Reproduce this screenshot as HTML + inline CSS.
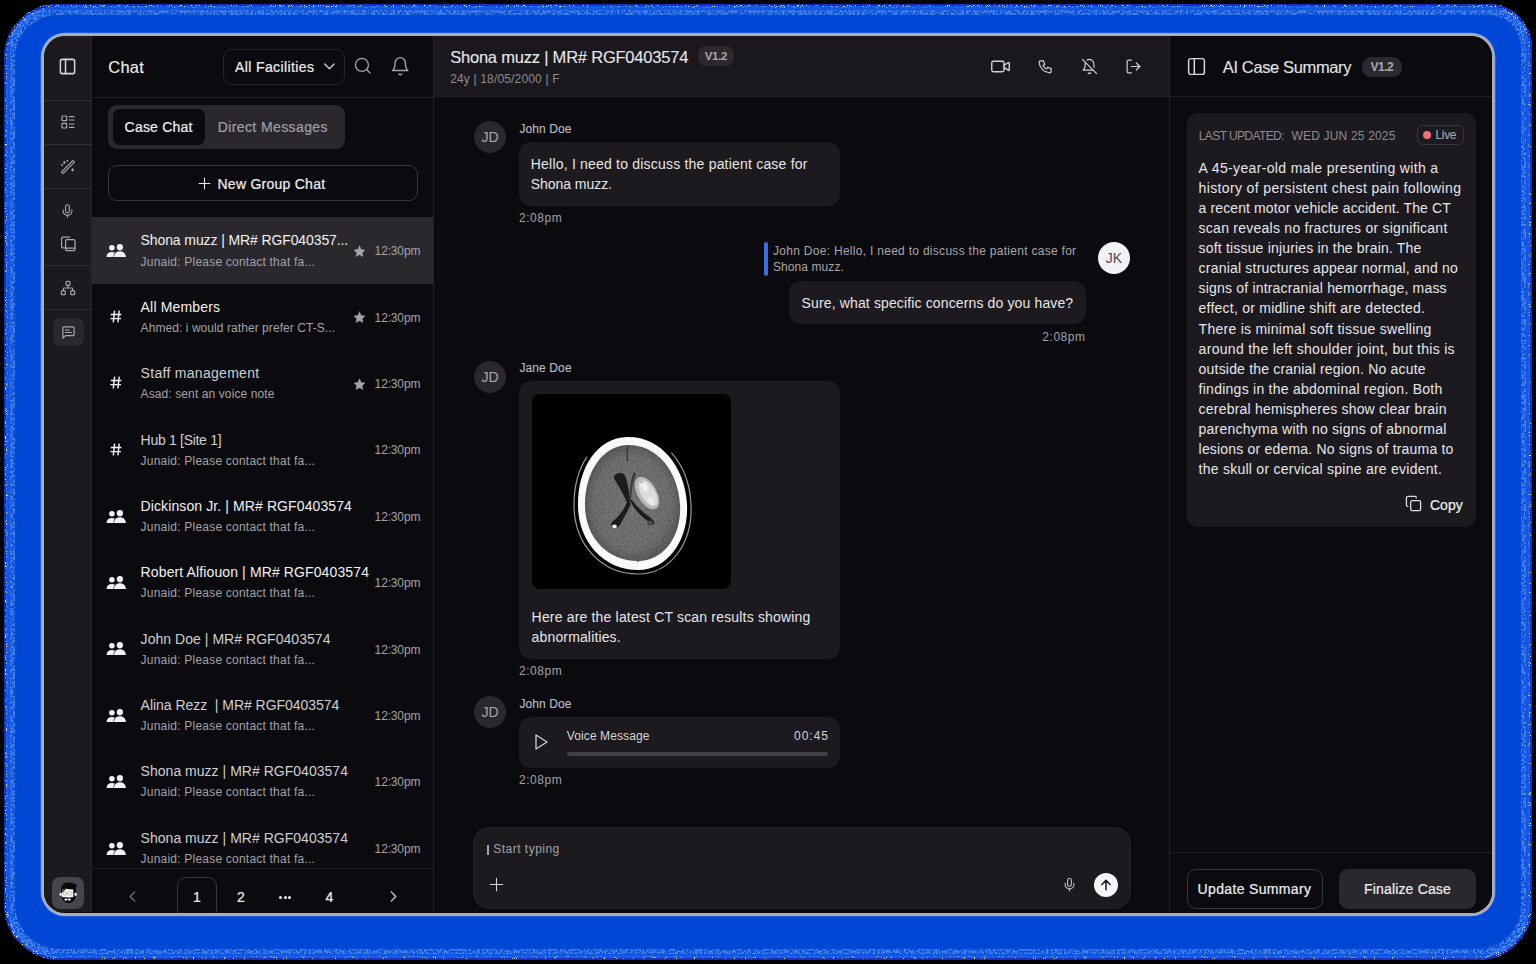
<!DOCTYPE html>
<html><head><meta charset="utf-8"><style>
html,body{margin:0;padding:0;width:1536px;height:964px;overflow:hidden;background:#000;}
body{position:relative;font-family:"Liberation Sans",sans-serif;}
.b{position:absolute;}
.t{position:absolute;white-space:nowrap;line-height:1;}
#blue{position:absolute;left:4px;top:4px;width:1528px;height:956px;border-radius:54px 44px 54px 56px;background:#0047D6;
box-shadow:inset 0 0 0 2px #1430C8, inset 0 0 9px 5px rgba(45,115,250,0.7);}
#spk{position:absolute;left:0;top:0;}
#frame{position:absolute;left:44px;top:36px;width:1448px;height:877px;border-radius:21px;overflow:hidden;background:#0B0A0E;
box-shadow:0 0 0 2.3px #ADAEB4, 0 0 0 3.3px #7FA3F5;}
#inner{position:absolute;left:-44px;top:-36px;width:1536px;height:964px;}
</style></head><body>
<div id="blue"></div>
<svg id="spk" width="1536" height="964" viewBox="0 0 1536 964">
<defs>
<filter id="spkf" x="0" y="0" width="100%" height="100%"><feTurbulence type="fractalNoise" baseFrequency="1.1" numOctaves="1" seed="11" result="t"/><feColorMatrix in="t" values="0 0 0 0 0.8  0 0 0 0 0.86  0 0 0 0 1  14 0 0 0 -8.6"/><feComposite in2="SourceGraphic" operator="in"/></filter>
</defs>
<filter id="mot" x="0" y="0" width="100%" height="100%"><feTurbulence type="fractalNoise" baseFrequency="0.45" numOctaves="2" seed="4" result="t"/><feColorMatrix in="t" values="0 0 0 0 0.3  0 0 0 0 0.55  0 0 0 0 1  5 0 0 0 -2.0"/><feGaussianBlur stdDeviation="0.5"/><feComposite in2="SourceGraphic" operator="in"/></filter>
<path d="M58.0 10.5 H1488.0 A37.5 37.5 0 0 1 1525.5 48.0 V906.0 A47.5 47.5 0 0 1 1478.0 953.5 H60.0 A49.5 49.5 0 0 1 10.5 904.0 V58.0 A47.5 47.5 0 0 1 58.0 10.5 Z" fill="none" stroke="#fff" stroke-width="9" filter="url(#mot)" opacity="0.45"/>
<path d="M58.0 5.5 H1488.0 A42.5 42.5 0 0 1 1530.5 48.0 V906.0 A52.5 52.5 0 0 1 1478.0 958.5 H60.0 A54.5 54.5 0 0 1 5.5 904.0 V58.0 A52.5 52.5 0 0 1 58.0 5.5 Z" fill="none" stroke="#fff" stroke-width="4" filter="url(#spkf)"/>
</svg>
<div id="frame"><div id="inner">
<div class="b" style="left:44px;top:36px;width:47px;height:876px;background:#1C1A1F;"></div>
<div class="b" style="left:91px;top:36px;width:1px;height:876px;background:#28262B;"></div>
<div class="b" style="left:44px;top:100px;width:47px;height:1px;background:#302E33;"></div>
<div class="b" style="left:44px;top:144px;width:47px;height:1px;background:#302E33;"></div>
<div class="b" style="left:44px;top:188px;width:47px;height:1px;background:#302E33;"></div>
<div class="b" style="left:44px;top:265px;width:47px;height:1px;background:#302E33;"></div>
<div class="b" style="left:44px;top:309px;width:47px;height:1px;background:#302E33;"></div>
<svg class="b" style="left:58px;top:57px;" width="19" height="19" viewBox="0 0 24 24" fill="none" stroke="#D8D8DA" stroke-width="1.9" stroke-linecap="round" stroke-linejoin="round"><rect x="3" y="3" width="18" height="18" rx="2.5"/><path d="M9.5 3v18"/></svg>
<svg class="b" style="left:60px;top:114px;" width="16" height="16" viewBox="0 0 24 24" fill="none" stroke="#A9A8AD" stroke-width="1.8" stroke-linecap="round" stroke-linejoin="round"><rect x="3" y="3" width="7" height="7" rx="1"/><rect x="3" y="14" width="7" height="7" rx="1"/><path d="M14 4h7"/><path d="M14 9h7"/><path d="M14 15h7"/><path d="M14 20h7"/></svg>
<svg class="b" style="left:60px;top:159px;" width="16" height="16" viewBox="0 0 24 24" fill="none" stroke="#A9A8AD" stroke-width="1.7" stroke-linecap="round" stroke-linejoin="round"><path d="M3.5 21.2 2.8 20.5a1.2 1.2 0 0 1 0-1.7L18.6 3a1.2 1.2 0 0 1 1.7 0l.7.7a1.2 1.2 0 0 1 0 1.7L5.2 21.2a1.2 1.2 0 0 1-1.7 0z"/><path d="M6.5 3.5l.6 1.4 1.4.6-1.4.6-.6 1.4-.6-1.4-1.4-.6 1.4-.6z" fill="#BDBCC0" stroke-width="1"/><path d="M19 14.5l.6 1.4 1.4.6-1.4.6-.6 1.4-.6-1.4-1.4-.6 1.4-.6z" fill="#BDBCC0" stroke-width="1"/><circle cx="11" cy="2.5" r=".6" fill="#BDBCC0"/><circle cx="3" cy="9" r=".6" fill="#BDBCC0"/></svg>
<svg class="b" style="left:60.3px;top:203px;" width="15" height="16" viewBox="0 0 24 24" fill="none" stroke="#A9A8AD" stroke-width="1.8" stroke-linecap="round" stroke-linejoin="round"><path d="M12 2a3 3 0 0 0-3 3v7a3 3 0 0 0 6 0V5a3 3 0 0 0-3-3Z"/><path d="M19 10v2a7 7 0 0 1-14 0v-2"/><path d="M12 19v3"/></svg>
<svg class="b" style="left:60px;top:236px;" width="16" height="16" viewBox="0 0 16 16" fill="none" stroke="#A9A8AD" stroke-width="1.25" stroke-linecap="round" stroke-linejoin="round"><path d="M4.6 11.8H2.9a1.3 1.3 0 0 1-1.3-1.3V2.3A1.3 1.3 0 0 1 2.9 1h6.8"/><rect x="5.6" y="3.7" width="9.4" height="11" rx="1.4"/><path d="M5.6 12.1h9.4"/></svg>
<svg class="b" style="left:60px;top:280px;" width="16" height="16" viewBox="0 0 24 24" fill="none" stroke="#A9A8AD" stroke-width="1.8" stroke-linecap="round" stroke-linejoin="round"><rect x="16" y="16" width="6" height="6" rx="1.5"/><rect x="2" y="16" width="6" height="6" rx="1.5"/><rect x="9" y="2" width="6" height="6" rx="1.5"/><path d="M5 16v-3a1 1 0 0 1 1-1h12a1 1 0 0 1 1 1v3"/><path d="M12 12V8"/></svg>
<div class="b" style="left:53px;top:318px;width:31px;height:28px;background:#2A282D;border-radius:7px;"></div>
<svg class="b" style="left:61px;top:325px;" width="15" height="15" viewBox="0 0 24 24" fill="none" stroke="#A9A8AD" stroke-width="1.9" stroke-linecap="round" stroke-linejoin="round"><path d="M21 15a2 2 0 0 1-2 2H7l-4 4V5a2 2 0 0 1 2-2h14a2 2 0 0 1 2 2z"/><path d="M13 8H7"/><path d="M17 12H7"/></svg>
<div class="b" style="left:52px;top:877px;width:32px;height:32px;background:#47454B;border-radius:8px;"></div>
<svg class="b" style="left:56px;top:880px" width="24" height="26" viewBox="0 0 24 26">
<path d="M5 11 C4.6 5.5 8 2.5 12.5 2.6 C15.5 2.6 18.5 3.5 21 5 C20 6 19.8 7 20 9 C20.3 12 20 16 19 18.5 C17.8 21.5 15 23 12.5 23 C10 23 7.2 21.5 6 18.5 C5.2 16.5 5.1 13.5 5 11 Z" fill="#080808"/>
<path d="M6 10.2 C7.2 8.4 9.2 8.6 11.2 8.9 C13.6 9.2 15.8 9 17.3 9.6 L17.4 17 C15 17.6 10 17.6 5.9 17 Z" fill="#f6f6f6"/>
<path d="M5.6 13 C6 10 7.6 8.2 10.4 8.4 C9.2 9.6 7.8 11.2 5.6 13 Z" fill="#080808"/>
<ellipse cx="4.7" cy="14.2" rx="1.2" ry="1.8" fill="#eeeeee"/><ellipse cx="19.6" cy="14.2" rx="1.2" ry="1.8" fill="#eeeeee"/>
<rect x="7.2" y="12" width="3.8" height="2.8" rx="0.8" fill="none" stroke="#9a9a9a" stroke-width="0.6"/><rect x="12" y="12" width="4" height="2.8" rx="0.8" fill="none" stroke="#9a9a9a" stroke-width="0.6"/>
<ellipse cx="9.9" cy="19.6" rx="1.6" ry="1.05" fill="#f2f2f2"/><ellipse cx="13.3" cy="19.6" rx="1.6" ry="1.05" fill="#f2f2f2"/>
</svg>
<div class="b" style="left:92px;top:36px;width:341px;height:876px;background:#0B0A0E;"></div>
<div class="b" style="left:433px;top:36px;width:1px;height:876px;background:#252328;"></div>
<div class="b" style="left:92px;top:97px;width:341px;height:1px;background:#1F1D22;"></div>
<div class="t" style="left:108.30px;top:59.03px;font-size:16.5px;color:#EDEDEF;-webkit-text-stroke:0.12px #EDEDEF;letter-spacing:0.233px;">Chat</div>
<div class="b" style="left:223px;top:49px;width:122px;height:36px;border:1px solid #29272C;border-radius:9px;box-sizing:border-box;"></div>
<div class="t" style="left:235.00px;top:60.15px;font-size:14px;color:#EDEDEF;-webkit-text-stroke:0.22px #EDEDEF;letter-spacing:0.385px;">All Facilities</div>
<svg class="b" style="left:320.1px;top:56.7px;" width="18.8" height="18.8" viewBox="0 0 24 24" fill="none" stroke="#D0D0D3" stroke-width="1.7" stroke-linecap="round" stroke-linejoin="round"><path d="m6 9 6 6 6-6"/></svg>
<svg class="b" style="left:353.4px;top:56.3px;" width="19.5" height="19.5" viewBox="0 0 24 24" fill="none" stroke="#A6A5AA" stroke-width="1.6" stroke-linecap="round" stroke-linejoin="round"><circle cx="11" cy="11" r="8"/><path d="m21 21-4.3-4.3"/></svg>
<svg class="b" style="left:389.6px;top:55.8px;" width="20.5" height="20.5" viewBox="0 0 24 24" fill="none" stroke="#A6A5AA" stroke-width="1.55" stroke-linecap="round" stroke-linejoin="round"><path d="M6 8a6 6 0 0 1 12 0c0 7 3 9 3 9H3s3-2 3-9"/><path d="M10.3 21a1.94 1.94 0 0 0 3.4 0"/></svg>
<div class="b" style="left:108px;top:105px;width:237px;height:44px;background:#2A282D;border-radius:9px;"></div>
<div class="b" style="left:113px;top:109px;width:92px;height:36px;background:#0B0A0E;border-radius:7px;"></div>
<div class="t" style="left:124.60px;top:120.35px;font-size:14px;color:#EDEDEF;-webkit-text-stroke:0.22px #EDEDEF;letter-spacing:0.200px;">Case Chat</div>
<div class="t" style="left:217.70px;top:120.35px;font-size:14px;color:#A09FA4;-webkit-text-stroke:0.22px #A09FA4;letter-spacing:0.400px;">Direct Messages</div>
<div class="b" style="left:108px;top:165px;width:310px;height:36px;border:1px solid #38363B;border-radius:9px;box-sizing:border-box;"></div>
<svg class="b" style="left:198px;top:177px;" width="13" height="13" viewBox="0 0 24 24" fill="none" stroke="#E8E8EA" stroke-width="2.0" stroke-linecap="round" stroke-linejoin="round"><path d="M12 2v20M2 12h20"/></svg>
<div class="t" style="left:217.50px;top:176.55px;font-size:14px;color:#EDEDEF;-webkit-text-stroke:0.22px #EDEDEF;letter-spacing:0.254px;">New Group Chat</div>
<div class="b" style="left:92px;top:217px;width:341px;height:651px;overflow:hidden">
<div class="b" style="left:-92px;top:-217px;width:1536px;height:964px">
<div class="b" style="left:92px;top:217px;width:341px;height:67px;background:#2A282D;"></div>
<svg class="b" style="left:106px;top:244.3px" width="20" height="14" viewBox="0 0 20 14"><circle cx="5.9" cy="3.8" r="2.75" fill="#F2F2F4"/><circle cx="13.9" cy="3.2" r="3.1" fill="#F2F2F4"/><path d="M0.5 12.9 C0.7 9.6 2.8 7.9 5.9 7.9 C7.1 7.9 8.1 8.2 8.9 8.6 C8 9.8 7.5 11.2 7.4 12.9 Z" fill="#F2F2F4"/><path d="M7.9 12.9 C8.2 9.3 10.6 7.2 13.9 7.2 C17.2 7.2 19.6 9.3 19.9 12.9 Z" fill="#F2F2F4"/></svg>
<div class="t" style="left:140.60px;top:233.45px;font-size:14px;color:#F0F0F2;letter-spacing:-0.107px;">Shona muzz | MR# RGF040357...</div>
<div class="t" style="left:140.60px;top:255.64px;font-size:12px;color:#A3A2A7;letter-spacing:0.213px;">Junaid: Please contact that fa...</div>
<svg class="b" style="left:353px;top:244.8px;" width="13" height="13" viewBox="0 0 24 24" fill="#A3A2A7" stroke="#A3A2A7" stroke-width="1" stroke-linecap="round" stroke-linejoin="round"><path d="M12 2l3.09 6.26L22 9.27l-5 4.87 1.18 6.88L12 17.77l-6.18 3.25L7 14.14 2 9.27l6.91-1.01L12 2z"/></svg>
<div class="t" style="right:1115.60px;top:245.44px;font-size:12px;color:#A3A2A7;text-align:right;letter-spacing:-0.150px;margin-right:0.150px;">12:30pm</div>
<svg class="b" style="left:110px;top:309.8px" width="12" height="13" viewBox="0 0 12 13" stroke="#F2F2F4" stroke-width="1.45" stroke-linecap="butt" fill="none"><path d="M4.6 0.6 3.3 12.4M9.2 0.6 7.9 12.4M0.8 4.4h10.6M0.4 8.6h10.6"/></svg>
<div class="t" style="left:140.60px;top:299.80px;font-size:14px;color:#F0F0F2;letter-spacing:0.170px;">All Members</div>
<div class="t" style="left:140.60px;top:321.99px;font-size:12px;color:#A3A2A7;letter-spacing:0.066px;">Ahmed: i would rather prefer CT-S...</div>
<svg class="b" style="left:353px;top:311.15px;" width="13" height="13" viewBox="0 0 24 24" fill="#A3A2A7" stroke="#A3A2A7" stroke-width="1" stroke-linecap="round" stroke-linejoin="round"><path d="M12 2l3.09 6.26L22 9.27l-5 4.87 1.18 6.88L12 17.77l-6.18 3.25L7 14.14 2 9.27l6.91-1.01L12 2z"/></svg>
<div class="t" style="right:1115.60px;top:311.79px;font-size:12px;color:#A3A2A7;text-align:right;letter-spacing:-0.150px;margin-right:0.150px;">12:30pm</div>
<svg class="b" style="left:110px;top:376.2px" width="12" height="13" viewBox="0 0 12 13" stroke="#F2F2F4" stroke-width="1.45" stroke-linecap="butt" fill="none"><path d="M4.6 0.6 3.3 12.4M9.2 0.6 7.9 12.4M0.8 4.4h10.6M0.4 8.6h10.6"/></svg>
<div class="t" style="left:140.60px;top:366.15px;font-size:14px;color:#CFCFD2;letter-spacing:0.293px;">Staff management</div>
<div class="t" style="left:140.60px;top:388.34px;font-size:12px;color:#A3A2A7;letter-spacing:0.104px;">Asad: sent an voice note</div>
<svg class="b" style="left:353px;top:377.5px;" width="13" height="13" viewBox="0 0 24 24" fill="#A3A2A7" stroke="#A3A2A7" stroke-width="1" stroke-linecap="round" stroke-linejoin="round"><path d="M12 2l3.09 6.26L22 9.27l-5 4.87 1.18 6.88L12 17.77l-6.18 3.25L7 14.14 2 9.27l6.91-1.01L12 2z"/></svg>
<div class="t" style="right:1115.60px;top:378.14px;font-size:12px;color:#A3A2A7;text-align:right;letter-spacing:-0.150px;margin-right:0.150px;">12:30pm</div>
<svg class="b" style="left:110px;top:442.6px" width="12" height="13" viewBox="0 0 12 13" stroke="#F2F2F4" stroke-width="1.45" stroke-linecap="butt" fill="none"><path d="M4.6 0.6 3.3 12.4M9.2 0.6 7.9 12.4M0.8 4.4h10.6M0.4 8.6h10.6"/></svg>
<div class="t" style="left:140.60px;top:432.50px;font-size:14px;color:#CFCFD2;letter-spacing:-0.300px;">Hub 1 [Site 1]</div>
<div class="t" style="left:140.60px;top:454.69px;font-size:12px;color:#A3A2A7;letter-spacing:0.213px;">Junaid: Please contact that fa...</div>
<div class="t" style="right:1115.60px;top:444.49px;font-size:12px;color:#A3A2A7;text-align:right;letter-spacing:-0.150px;margin-right:0.150px;">12:30pm</div>
<svg class="b" style="left:106px;top:509.7px" width="20" height="14" viewBox="0 0 20 14"><circle cx="5.9" cy="3.8" r="2.75" fill="#F2F2F4"/><circle cx="13.9" cy="3.2" r="3.1" fill="#F2F2F4"/><path d="M0.5 12.9 C0.7 9.6 2.8 7.9 5.9 7.9 C7.1 7.9 8.1 8.2 8.9 8.6 C8 9.8 7.5 11.2 7.4 12.9 Z" fill="#F2F2F4"/><path d="M7.9 12.9 C8.2 9.3 10.6 7.2 13.9 7.2 C17.2 7.2 19.6 9.3 19.9 12.9 Z" fill="#F2F2F4"/></svg>
<div class="t" style="left:140.60px;top:498.85px;font-size:14px;color:#F0F0F2;letter-spacing:0.103px;">Dickinson Jr. | MR# RGF0403574</div>
<div class="t" style="left:140.60px;top:521.04px;font-size:12px;color:#A3A2A7;letter-spacing:0.213px;">Junaid: Please contact that fa...</div>
<div class="t" style="right:1115.60px;top:510.84px;font-size:12px;color:#A3A2A7;text-align:right;letter-spacing:-0.150px;margin-right:0.150px;">12:30pm</div>
<svg class="b" style="left:106px;top:576.0px" width="20" height="14" viewBox="0 0 20 14"><circle cx="5.9" cy="3.8" r="2.75" fill="#F2F2F4"/><circle cx="13.9" cy="3.2" r="3.1" fill="#F2F2F4"/><path d="M0.5 12.9 C0.7 9.6 2.8 7.9 5.9 7.9 C7.1 7.9 8.1 8.2 8.9 8.6 C8 9.8 7.5 11.2 7.4 12.9 Z" fill="#F2F2F4"/><path d="M7.9 12.9 C8.2 9.3 10.6 7.2 13.9 7.2 C17.2 7.2 19.6 9.3 19.9 12.9 Z" fill="#F2F2F4"/></svg>
<div class="t" style="left:140.60px;top:565.20px;font-size:14px;color:#F0F0F2;letter-spacing:0.119px;">Robert Alfiouon | MR# RGF0403574</div>
<div class="t" style="left:140.60px;top:587.39px;font-size:12px;color:#A3A2A7;letter-spacing:0.213px;">Junaid: Please contact that fa...</div>
<div class="t" style="right:1115.60px;top:577.19px;font-size:12px;color:#A3A2A7;text-align:right;letter-spacing:-0.150px;margin-right:0.150px;">12:30pm</div>
<svg class="b" style="left:106px;top:642.4px" width="20" height="14" viewBox="0 0 20 14"><circle cx="5.9" cy="3.8" r="2.75" fill="#F2F2F4"/><circle cx="13.9" cy="3.2" r="3.1" fill="#F2F2F4"/><path d="M0.5 12.9 C0.7 9.6 2.8 7.9 5.9 7.9 C7.1 7.9 8.1 8.2 8.9 8.6 C8 9.8 7.5 11.2 7.4 12.9 Z" fill="#F2F2F4"/><path d="M7.9 12.9 C8.2 9.3 10.6 7.2 13.9 7.2 C17.2 7.2 19.6 9.3 19.9 12.9 Z" fill="#F2F2F4"/></svg>
<div class="t" style="left:140.60px;top:631.55px;font-size:14px;color:#CFCFD2;letter-spacing:0.042px;">John Doe | MR# RGF0403574</div>
<div class="t" style="left:140.60px;top:653.74px;font-size:12px;color:#A3A2A7;letter-spacing:0.213px;">Junaid: Please contact that fa...</div>
<div class="t" style="right:1115.60px;top:643.54px;font-size:12px;color:#A3A2A7;text-align:right;letter-spacing:-0.150px;margin-right:0.150px;">12:30pm</div>
<svg class="b" style="left:106px;top:708.8px" width="20" height="14" viewBox="0 0 20 14"><circle cx="5.9" cy="3.8" r="2.75" fill="#F2F2F4"/><circle cx="13.9" cy="3.2" r="3.1" fill="#F2F2F4"/><path d="M0.5 12.9 C0.7 9.6 2.8 7.9 5.9 7.9 C7.1 7.9 8.1 8.2 8.9 8.6 C8 9.8 7.5 11.2 7.4 12.9 Z" fill="#F2F2F4"/><path d="M7.9 12.9 C8.2 9.3 10.6 7.2 13.9 7.2 C17.2 7.2 19.6 9.3 19.9 12.9 Z" fill="#F2F2F4"/></svg>
<div class="t" style="left:140.60px;top:697.90px;font-size:14px;color:#CFCFD2;letter-spacing:-0.037px;">Alina Rezz &nbsp;| MR# RGF0403574</div>
<div class="t" style="left:140.60px;top:720.09px;font-size:12px;color:#A3A2A7;letter-spacing:0.213px;">Junaid: Please contact that fa...</div>
<div class="t" style="right:1115.60px;top:709.89px;font-size:12px;color:#A3A2A7;text-align:right;letter-spacing:-0.150px;margin-right:0.150px;">12:30pm</div>
<svg class="b" style="left:106px;top:775.1px" width="20" height="14" viewBox="0 0 20 14"><circle cx="5.9" cy="3.8" r="2.75" fill="#F2F2F4"/><circle cx="13.9" cy="3.2" r="3.1" fill="#F2F2F4"/><path d="M0.5 12.9 C0.7 9.6 2.8 7.9 5.9 7.9 C7.1 7.9 8.1 8.2 8.9 8.6 C8 9.8 7.5 11.2 7.4 12.9 Z" fill="#F2F2F4"/><path d="M7.9 12.9 C8.2 9.3 10.6 7.2 13.9 7.2 C17.2 7.2 19.6 9.3 19.9 12.9 Z" fill="#F2F2F4"/></svg>
<div class="t" style="left:140.60px;top:764.25px;font-size:14px;color:#CFCFD2;letter-spacing:0.023px;">Shona muzz | MR# RGF0403574</div>
<div class="t" style="left:140.60px;top:786.44px;font-size:12px;color:#A3A2A7;letter-spacing:0.213px;">Junaid: Please contact that fa...</div>
<div class="t" style="right:1115.60px;top:776.24px;font-size:12px;color:#A3A2A7;text-align:right;letter-spacing:-0.150px;margin-right:0.150px;">12:30pm</div>
<svg class="b" style="left:106px;top:841.5px" width="20" height="14" viewBox="0 0 20 14"><circle cx="5.9" cy="3.8" r="2.75" fill="#F2F2F4"/><circle cx="13.9" cy="3.2" r="3.1" fill="#F2F2F4"/><path d="M0.5 12.9 C0.7 9.6 2.8 7.9 5.9 7.9 C7.1 7.9 8.1 8.2 8.9 8.6 C8 9.8 7.5 11.2 7.4 12.9 Z" fill="#F2F2F4"/><path d="M7.9 12.9 C8.2 9.3 10.6 7.2 13.9 7.2 C17.2 7.2 19.6 9.3 19.9 12.9 Z" fill="#F2F2F4"/></svg>
<div class="t" style="left:140.60px;top:830.60px;font-size:14px;color:#CFCFD2;letter-spacing:0.023px;">Shona muzz | MR# RGF0403574</div>
<div class="t" style="left:140.60px;top:852.79px;font-size:12px;color:#A3A2A7;letter-spacing:0.213px;">Junaid: Please contact that fa...</div>
<div class="t" style="right:1115.60px;top:842.59px;font-size:12px;color:#A3A2A7;text-align:right;letter-spacing:-0.150px;margin-right:0.150px;">12:30pm</div>
</div></div>
<div class="b" style="left:92px;top:868px;width:341px;height:1px;background:#1F1D22;"></div>
<div class="b" style="left:177px;top:877px;width:40px;height:43px;border:1px solid #38363B;border-radius:9px;box-sizing:border-box;"></div>
<svg class="b" style="left:128px;top:891px;" width="9" height="11" viewBox="0 0 9 12" fill="none" stroke="#77767B" stroke-width="1.4" stroke-linecap="round" stroke-linejoin="round"><path d="M7 1 2 6l5 5"/></svg>
<svg class="b" style="left:389px;top:891px;" width="9" height="11" viewBox="0 0 9 12" fill="none" stroke="#D0D0D3" stroke-width="1.4" stroke-linecap="round" stroke-linejoin="round"><path d="M2 1l5 5-5 5"/></svg>
<div class="t" style="left:96.80px;width:200px;text-align:center;top:890.15px;font-size:14px;color:#EDEDEF;-webkit-text-stroke:0.22px #EDEDEF;">1</div>
<div class="t" style="left:140.80px;width:200px;text-align:center;top:890.15px;font-size:14px;color:#EDEDEF;-webkit-text-stroke:0.22px #EDEDEF;">2</div>
<div class="b" style="left:279px;top:895.5px;width:3px;height:3.0px;background:#EDEDEF;border-radius:50%;"></div>
<div class="b" style="left:283.6px;top:895.5px;width:3.0px;height:3.0px;background:#EDEDEF;border-radius:50%;"></div>
<div class="b" style="left:288.2px;top:895.5px;width:3.0px;height:3.0px;background:#EDEDEF;border-radius:50%;"></div>
<div class="t" style="left:229.30px;width:200px;text-align:center;top:890.15px;font-size:14px;color:#EDEDEF;-webkit-text-stroke:0.22px #EDEDEF;">4</div>
<div class="b" style="left:434px;top:36px;width:735px;height:876px;background:#0B0A0E;"></div>
<div class="b" style="left:434px;top:36px;width:735px;height:60px;background:#1A181D;"></div>
<div class="b" style="left:434px;top:96px;width:735px;height:1px;background:#232126;"></div>
<div class="b" style="left:1169px;top:36px;width:1px;height:876px;background:#252328;"></div>
<div class="t" style="left:450.20px;top:48.73px;font-size:16.5px;color:#E6E6E8;-webkit-text-stroke:0.12px #E6E6E8;letter-spacing:-0.212px;">Shona muzz | MR# RGF0403574</div>
<div class="b" style="left:698px;top:46px;width:36px;height:20px;background:#2B292E;border-radius:8px;"></div>
<div class="t" style="left:616.00px;width:200px;text-align:center;top:51.06px;font-size:11.5px;color:#A9A8AD;font-weight:700;letter-spacing:-0.267px;text-indent:-0.133px;">V1.2</div>
<div class="t" style="left:450.20px;top:72.84px;font-size:12px;color:#8D8C91;letter-spacing:0.158px;">24y | 18/05/2000 | F</div>
<svg class="b" style="left:990px;top:56px;" width="21" height="21" viewBox="0 0 24 24" fill="none" stroke="#D0D0D3" stroke-width="1.6" stroke-linecap="round" stroke-linejoin="round"><path d="m16 13 5.223 3.482a.5.5 0 0 0 .777-.416V7.87a.5.5 0 0 0-.752-.432L16 10.5"/><rect x="2" y="6" width="14" height="12" rx="2"/></svg>
<svg class="b" style="left:1037px;top:58px;" width="17" height="17" viewBox="0 0 24 24" fill="none" stroke="#D0D0D3" stroke-width="1.7" stroke-linecap="round" stroke-linejoin="round"><path d="M5 4h4l2 5l-2.5 1.5a11 11 0 0 0 5 5l1.5-2.5l5 2v4a2 2 0 0 1-2 2a16 16 0 0 1-15-15a2 2 0 0 1 2-2"/></svg>
<svg class="b" style="left:1081px;top:58px;" width="17" height="17" viewBox="0 0 24 24" fill="none" stroke="#D0D0D3" stroke-width="1.7" stroke-linecap="round" stroke-linejoin="round"><path d="M8.7 3A6 6 0 0 1 18 8a21.3 21.3 0 0 0 .6 5"/><path d="M17 17H3s3-2 3-9a4.67 4.67 0 0 1 .3-1.7"/><path d="M10.3 21a1.94 1.94 0 0 0 3.4 0"/><path d="m2 2 20 20"/></svg>
<svg class="b" style="left:1125px;top:58px;" width="17" height="17" viewBox="0 0 24 24" fill="none" stroke="#D0D0D3" stroke-width="1.7" stroke-linecap="round" stroke-linejoin="round"><path d="M9 21H5a2 2 0 0 1-2-2V5a2 2 0 0 1 2-2h4"/><path d="m16 17 5-5-5-5"/><path d="M21 12H9"/></svg>
<div class="b" style="left:474px;top:121px;width:32px;height:32px;background:#2A282D;border-radius:50%;"></div>
<div class="t" style="left:390.00px;width:200px;text-align:center;top:130.15px;font-size:14px;color:#A8A7AC;">JD</div>
<div class="t" style="left:519.40px;top:122.84px;font-size:12px;color:#BDBCC1;-webkit-text-stroke:0.12px #BDBCC1;letter-spacing:0.086px;">John Doe</div>
<div class="b" style="left:519px;top:141.5px;width:321px;height:64.0px;background:#1C1A1F;border-radius:12px;"></div>
<div class="t" style="left:530.80px;top:156.95px;font-size:14px;color:#E6E6E8;letter-spacing:0.202px;">Hello, I need to discuss the patient case for</div>
<div class="t" style="left:530.80px;top:177.05px;font-size:14px;color:#E6E6E8;letter-spacing:-0.050px;">Shona muzz.</div>
<div class="t" style="left:519.00px;top:211.54px;font-size:12px;color:#A3A2A7;letter-spacing:0.520px;">2:08pm</div>
<div class="b" style="left:764px;top:242px;width:3.5px;height:34px;background:#3A6FE4;border-radius:2px;"></div>
<div class="t" style="left:773.00px;top:245.14px;font-size:12px;color:#A8A7AC;letter-spacing:0.289px;">John Doe: Hello, I need to discuss the patient case for</div>
<div class="t" style="left:773.00px;top:260.84px;font-size:12px;color:#A8A7AC;letter-spacing:0.080px;">Shona muzz.</div>
<div class="b" style="left:1098px;top:242px;width:32px;height:32px;background:#F2F2F4;border-radius:50%;"></div>
<div class="t" style="left:1014.00px;width:200px;text-align:center;top:251.15px;font-size:14px;color:#4A494F;">JK</div>
<div class="b" style="left:789px;top:280.5px;width:296.5px;height:43.5px;background:#1C1A1F;border-radius:12px;"></div>
<div class="t" style="left:801.60px;top:295.75px;font-size:14px;color:#E6E6E8;letter-spacing:0.135px;">Sure, what specific concerns do you have?</div>
<div class="t" style="right:451.00px;top:330.54px;font-size:12px;color:#A3A2A7;text-align:right;letter-spacing:0.520px;margin-right:-0.520px;">2:08pm</div>
<div class="b" style="left:474px;top:360.5px;width:32px;height:32.0px;background:#2A282D;border-radius:50%;"></div>
<div class="t" style="left:390.00px;width:200px;text-align:center;top:369.65px;font-size:14px;color:#A8A7AC;">JD</div>
<div class="t" style="left:519.40px;top:361.74px;font-size:12px;color:#BDBCC1;-webkit-text-stroke:0.12px #BDBCC1;letter-spacing:0.114px;">Jane Doe</div>
<div class="b" style="left:519px;top:381px;width:321px;height:278px;background:#1C1A1F;border-radius:12px;"></div>
<div class="t" style="left:531.60px;top:610.45px;font-size:14px;color:#E6E6E8;letter-spacing:0.176px;">Here are the latest CT scan results showing</div>
<div class="t" style="left:531.60px;top:630.15px;font-size:14px;color:#E6E6E8;letter-spacing:0.146px;">abnormalities.</div>
<div class="t" style="left:519.00px;top:665.04px;font-size:12px;color:#A3A2A7;letter-spacing:0.520px;">2:08pm</div>
<svg class="b" style="left:532px;top:394px;border-radius:8px" width="199" height="195" viewBox="0 0 199 195">
<defs>
<filter id="nz" x="0" y="0" width="100%" height="100%"><feTurbulence type="fractalNoise" baseFrequency="0.5" numOctaves="2" seed="7"/><feColorMatrix values="0 0 0 0 0  0 0 0 0 0  0 0 0 0 0  0 0 0 -1.4 0.9"/><feComposite in2="SourceGraphic" operator="in"/></filter>
<filter id="bl"><feGaussianBlur stdDeviation="0.6"/></filter>
<filter id="bl2"><feGaussianBlur stdDeviation="1.3"/></filter>
<radialGradient id="br" cx="50%" cy="50%" r="50%"><stop offset="0" stop-color="#787878"/><stop offset="0.8" stop-color="#727272"/><stop offset="1" stop-color="#5e5e5e"/></radialGradient>
</defs>
<rect width="199" height="195" fill="#000"/>
<path d="M95 39 C131 38 157 70 159 110 C161 150 138 180 106 180 C69 180 42 150 42 111 C42 70 64 40 95 39 Z" fill="none" stroke="#9a9a9a" stroke-width="1.2" stroke-dasharray="0 50 310 100"/>
<path d="M95 43 C128 42 153 72 155 110 C157 146 136 176 106 176 C72 176 46 148 46 111 C46 72 66 44 95 43 Z" fill="#fafafa" filter="url(#bl)"/>
<path d="M95 51 C124 50 146 76 148 110 C150 142 132 167 106 167 C76 167 53 144 53 111 C53 77 71 52 95 51 Z" fill="url(#br)" filter="url(#bl)"/>
<path d="M95 51 C124 50 146 76 148 110 C150 142 132 167 106 167 C76 167 53 144 53 111 C53 77 71 52 95 51 Z" fill="#000" filter="url(#nz)" opacity="0.28"/>
<g filter="url(#bl)">

<path d="M82 84 C82 79 88 78 92 80 C95 84 97 96 98 108 L95 109 C92 100 86 92 82 84 Z" fill="#1c1c1c"/>
<path d="M102 78 C99 85 97 96 97.5 108 L99 108 C99.5 97 101 87 104 80 Z" fill="#3a3a3a"/>
<path d="M96 106 C93 114 88 122 80 128 C77 134 84 136 88 131 C91 126 95 118 99 110 Z" fill="#1c1c1c"/>
<path d="M98 106 C102 116 110 123 117 128 C122 133 124 130 121 126 C115 121 105 114 100 106 Z" fill="#1c1c1c"/>
<ellipse cx="118" cy="129" rx="3" ry="2.5" fill="#4a4a4a"/>
<ellipse cx="115" cy="99" rx="9.5" ry="18" transform="rotate(-30 115 99)" fill="#b8b8b8"/>
<ellipse cx="116" cy="99" rx="7" ry="14.5" transform="rotate(-30 116 99)" fill="#dcdcdc"/>
<ellipse cx="112" cy="92" rx="3.2" ry="5.5" transform="rotate(-30 112 92)" fill="#efefef"/>
<ellipse cx="119" cy="107" rx="2.8" ry="4.5" transform="rotate(-30 119 107)" fill="#e8e8e8"/>
<ellipse cx="109.5" cy="87" rx="2" ry="2.5" fill="#c0c0c0"/>
<ellipse cx="82.5" cy="132.4" rx="2.3" ry="1.8" fill="#ffffff"/>
<path d="M95.2 53 L95.4 67" stroke="#333" stroke-width="1.3"/>
<path d="M105 160 L106 168" stroke="#555" stroke-width="1.5"/>
</g>
</svg>
<div class="b" style="left:474px;top:695.8px;width:32px;height:32.0px;background:#2A282D;border-radius:50%;"></div>
<div class="t" style="left:390.00px;width:200px;text-align:center;top:704.95px;font-size:14px;color:#A8A7AC;">JD</div>
<div class="t" style="left:519.40px;top:697.84px;font-size:12px;color:#BDBCC1;-webkit-text-stroke:0.12px #BDBCC1;letter-spacing:0.086px;">John Doe</div>
<div class="b" style="left:519px;top:716.5px;width:321px;height:51.5px;background:#1C1A1F;border-radius:12px;"></div>
<svg class="b" style="left:533px;top:733px;" width="16" height="18" viewBox="0 0 16 18" fill="none" stroke="#D0D0D4" stroke-width="1.3" stroke-linecap="round" stroke-linejoin="round"><path d="M3 2 L14 9 L3 16 Z"/></svg>
<div class="t" style="left:566.80px;top:729.54px;font-size:12px;color:#D6D6D9;letter-spacing:0.100px;">Voice Message</div>
<div class="t" style="right:708.00px;top:729.54px;font-size:12px;color:#D6D6D9;text-align:right;letter-spacing:1.000px;margin-right:-1.000px;">00:45</div>
<div class="b" style="left:567px;top:752px;width:261px;height:4px;background:#434147;border-radius:2px;"></div>
<div class="t" style="left:519.00px;top:773.84px;font-size:12px;color:#A3A2A7;letter-spacing:0.520px;">2:08pm</div>
<div class="b" style="left:473px;top:827px;width:658px;height:82px;background:#1C1A1F;border:1px solid #232126;border-radius:16px;box-sizing:border-box;"></div>
<div class="b" style="left:487px;top:845px;width:2px;height:10px;background:#A3A2A7;"></div>
<div class="t" style="left:493.20px;top:842.84px;font-size:12px;color:#A3A2A7;letter-spacing:0.491px;">Start typing</div>
<svg class="b" style="left:489px;top:877px;" width="15" height="15" viewBox="0 0 24 24" fill="none" stroke="#D6D6D9" stroke-width="1.7" stroke-linecap="round" stroke-linejoin="round"><path d="M12 2v20M2 12h20"/></svg>
<svg class="b" style="left:1062px;top:877px;" width="15" height="15" viewBox="0 0 24 24" fill="none" stroke="#BDBCC0" stroke-width="1.8" stroke-linecap="round" stroke-linejoin="round"><path d="M12 2a3 3 0 0 0-3 3v7a3 3 0 0 0 6 0V5a3 3 0 0 0-3-3Z"/><path d="M19 10v2a7 7 0 0 1-14 0v-2"/><path d="M12 19v3"/></svg>
<div class="b" style="left:1094px;top:873px;width:24px;height:24px;background:#F6F6F8;border-radius:50%;"></div>
<svg class="b" style="left:1099px;top:878px;" width="14" height="14" viewBox="0 0 24 24" fill="none" stroke="#1A181D" stroke-width="2.6" stroke-linecap="round" stroke-linejoin="round"><path d="M12 20V4M5 11l7-7 7 7"/></svg>
<div class="b" style="left:1170px;top:36px;width:330px;height:884px;background:#0B0A0E;"></div>
<div class="b" style="left:1170px;top:96px;width:330px;height:1px;background:#1F1D22;"></div>
<svg class="b" style="left:1186px;top:56px;" width="21" height="21" viewBox="0 0 24 24" fill="none" stroke="#D8D8DA" stroke-width="1.7" stroke-linecap="round" stroke-linejoin="round"><rect x="3" y="3" width="18" height="18" rx="2.5"/><path d="M9.5 3v18"/></svg>
<div class="t" style="left:1222.80px;top:59.33px;font-size:16.5px;color:#E2E2E4;-webkit-text-stroke:0.12px #E2E2E4;letter-spacing:-0.371px;">AI Case Summary</div>
<div class="b" style="left:1362px;top:56.5px;width:40px;height:20.0px;background:#2B292E;border-radius:9px;"></div>
<div class="t" style="left:1282.00px;width:200px;text-align:center;top:60.84px;font-size:12px;color:#A9A8AD;font-weight:700;letter-spacing:-0.467px;text-indent:-0.233px;">V1.2</div>
<div class="b" style="left:1186.5px;top:113px;width:289.5px;height:414px;background:#1C1A1F;border-radius:11px;"></div>
<div class="t" style="left:1198.80px;top:129.64px;font-size:12px;color:#8D8C91;letter-spacing:-0.608px;">LAST UPDATED:</div>
<div class="t" style="left:1291.50px;top:129.64px;font-size:12px;color:#8D8C91;letter-spacing:0.179px;">WED JUN 25 2025</div>
<div class="b" style="left:1417px;top:125px;width:46.5px;height:20px;border:1px solid #38363B;border-radius:6px;box-sizing:border-box;"></div>
<div class="b" style="left:1422.5px;top:131px;width:8.0px;height:8px;background:#F07272;border-radius:50%;"></div>
<div class="t" style="left:1435.50px;top:129.04px;font-size:12px;color:#A8A7AC;-webkit-text-stroke:0.12px #A8A7AC;letter-spacing:-0.333px;">Live</div>
<div class="t" style="left:1198.60px;top:160.75px;font-size:14px;color:#E6E6E8;letter-spacing:0.351px;">A 45-year-old male presenting with a</div>
<div class="t" style="left:1198.60px;top:180.85px;font-size:14px;color:#E6E6E8;letter-spacing:0.363px;">history of persistent chest pain following</div>
<div class="t" style="left:1198.60px;top:200.95px;font-size:14px;color:#E6E6E8;letter-spacing:0.111px;">a recent motor vehicle accident. The CT</div>
<div class="t" style="left:1198.60px;top:221.05px;font-size:14px;color:#E6E6E8;letter-spacing:0.251px;">scan reveals no fractures or significant</div>
<div class="t" style="left:1198.60px;top:241.15px;font-size:14px;color:#E6E6E8;letter-spacing:0.178px;">soft tissue injuries in the brain. The</div>
<div class="t" style="left:1198.60px;top:261.25px;font-size:14px;color:#E6E6E8;letter-spacing:0.203px;">cranial structures appear normal, and no</div>
<div class="t" style="left:1198.60px;top:281.35px;font-size:14px;color:#E6E6E8;letter-spacing:0.184px;">signs of intracranial hemorrhage, mass</div>
<div class="t" style="left:1198.60px;top:301.45px;font-size:14px;color:#E6E6E8;letter-spacing:0.232px;">effect, or midline shift are detected.</div>
<div class="t" style="left:1198.60px;top:321.55px;font-size:14px;color:#E6E6E8;letter-spacing:0.264px;">There is minimal soft tissue swelling</div>
<div class="t" style="left:1198.60px;top:341.65px;font-size:14px;color:#E6E6E8;letter-spacing:0.295px;">around the left shoulder joint, but this is</div>
<div class="t" style="left:1198.60px;top:361.75px;font-size:14px;color:#E6E6E8;letter-spacing:0.194px;">outside the cranial region. No acute</div>
<div class="t" style="left:1198.60px;top:381.85px;font-size:14px;color:#E6E6E8;letter-spacing:0.254px;">findings in the abdominal region. Both</div>
<div class="t" style="left:1198.60px;top:401.95px;font-size:14px;color:#E6E6E8;letter-spacing:0.206px;">cerebral hemispheres show clear brain</div>
<div class="t" style="left:1198.60px;top:422.05px;font-size:14px;color:#E6E6E8;letter-spacing:0.229px;">parenchyma with no signs of abnormal</div>
<div class="t" style="left:1198.60px;top:442.15px;font-size:14px;color:#E6E6E8;letter-spacing:0.192px;">lesions or edema. No signs of trauma to</div>
<div class="t" style="left:1198.60px;top:462.25px;font-size:14px;color:#E6E6E8;letter-spacing:0.251px;">the skull or cervical spine are evident.</div>
<svg class="b" style="left:1405px;top:495px;" width="17" height="17" viewBox="0 0 24 24" fill="none" stroke="#E0E0E2" stroke-width="1.8" stroke-linecap="round" stroke-linejoin="round"><rect width="14" height="14" x="8" y="8" rx="2" ry="2"/><path d="M4 16c-1.1 0-2-.9-2-2V4c0-1.1.9-2 2-2h10c1.1 0 2 .9 2 2"/></svg>
<div class="t" style="left:1430.00px;top:497.65px;font-size:14px;color:#EDEDEF;-webkit-text-stroke:0.22px #EDEDEF;letter-spacing:0.000px;">Copy</div>
<div class="b" style="left:1170px;top:852px;width:330px;height:1px;background:#1F1D22;"></div>
<div class="b" style="left:1186.5px;top:868.5px;width:136.5px;height:40.5px;border:1px solid #38363B;border-radius:9px;box-sizing:border-box;"></div>
<div class="t" style="left:1197.60px;top:882.05px;font-size:14px;color:#EDEDEF;-webkit-text-stroke:0.22px #EDEDEF;letter-spacing:0.338px;">Update Summary</div>
<div class="b" style="left:1339px;top:868.5px;width:137px;height:40.5px;background:#2A282D;border-radius:9px;"></div>
<div class="t" style="left:1364.00px;top:882.05px;font-size:14px;color:#EDEDEF;-webkit-text-stroke:0.22px #EDEDEF;letter-spacing:0.167px;">Finalize Case</div>

</div></div>
</body></html>
